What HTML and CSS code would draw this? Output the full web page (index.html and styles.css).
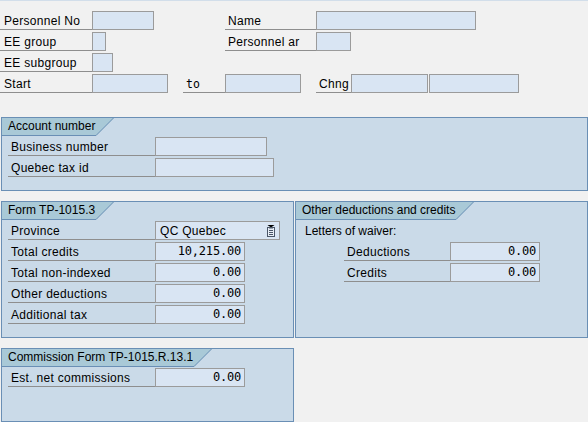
FILE: index.html
```html
<!DOCTYPE html>
<html>
<head>
<meta charset="utf-8">
<link rel="stylesheet" href="styles.css">
</head>
<body>
<div class="page">
  <div class="header">
    <div class="row">
      <div class="left">
        <span class="lbl w92">Personnel No</span>
        <span class="inp" style="width:62px"></span>
      </div>
      <span class="lbl w91">Name</span>
      <span class="inp" style="width:160px"></span>
    </div>
    <div class="row">
      <div class="left">
        <span class="lbl w92">EE group</span>
        <span class="inp" style="width:14px"></span>
      </div>
      <span class="lbl w91">Personnel ar</span>
      <span class="inp" style="width:35px"></span>
    </div>
    <div class="row">
      <div class="left">
        <span class="lbl w92">EE subgroup</span>
        <span class="inp" style="width:21px"></span>
      </div>
    </div>
    <div class="row">
      <span class="lbl w92">Start</span>
      <span class="inp" style="width:76px"></span>
      <span class="lbl lbl-to">to</span>
      <span class="inp" style="width:76px"></span>
      <span class="lbl lbl-chng">Chng</span>
      <span class="inp" style="width:77px"></span>
      <span class="inp inp-next" style="width:90px"></span>
    </div>
  </div>

  <section class="group group-account">
    <div class="tab"><span class="tab-text">Account number</span><svg class="slant" width="18" height="18" viewBox="0 0 18 18"><polygon points="0,0 18,0 0,18" fill="#a9c9d7"/><line x1="0" y1="17.5" x2="18" y2="-0.5" stroke="#6a8fb5" stroke-width="1"/></svg></div>
    <div class="rows">
      <div class="frow"><span class="flbl">Business number</span><span class="inp" style="width:112px"></span></div>
      <div class="frow"><span class="flbl">Quebec tax id</span><span class="inp" style="width:119px"></span></div>
    </div>
  </section>

  <div class="pair">
    <section class="group group-half">
      <div class="tab"><span class="tab-text">Form TP-1015.3</span><svg class="slant" width="18" height="18" viewBox="0 0 18 18"><polygon points="0,0 18,0 0,18" fill="#a9c9d7"/><line x1="0" y1="17.5" x2="18" y2="-0.5" stroke="#6a8fb5" stroke-width="1"/></svg></div>
      <div class="rows">
        <div class="frow"><span class="flbl">Province</span><span class="inp inp-drop" style="width:125px"><span>QC Quebec</span><svg class="dd" width="8" height="12" viewBox="0 0 8 12"><polygon points="0.5,0 7.5,0 4,2.5" fill="#000"/><rect x="0.5" y="2.5" width="7" height="9" fill="#e8eef6" stroke="#4a5668"/><rect x="2" y="2" width="4" height="1.5" fill="#4a5668"/><line x1="2" y1="5.5" x2="6" y2="5.5" stroke="#4a5668"/><line x1="2" y1="7.5" x2="6" y2="7.5" stroke="#4a5668"/><line x1="2" y1="9.5" x2="6" y2="9.5" stroke="#4a5668"/></svg></span></div>
        <div class="frow"><span class="flbl">Total credits</span><span class="inp num" style="width:90px">10,215.00</span></div>
        <div class="frow"><span class="flbl">Total non-indexed</span><span class="inp num" style="width:90px">0.00</span></div>
        <div class="frow"><span class="flbl">Other deductions</span><span class="inp num" style="width:90px">0.00</span></div>
        <div class="frow"><span class="flbl">Additional tax</span><span class="inp num" style="width:90px">0.00</span></div>
      </div>
    </section>
    <section class="group group-half">
      <div class="tab"><span class="tab-text">Other deductions and credits</span><svg class="slant" width="18" height="18" viewBox="0 0 18 18"><polygon points="0,0 18,0 0,18" fill="#a9c9d7"/><line x1="0" y1="17.5" x2="18" y2="-0.5" stroke="#6a8fb5" stroke-width="1"/></svg></div>
      <div class="rows rows-other">
        <div class="frow"><span class="plain">Letters of waiver:</span></div>
        <div class="frow indent"><span class="flbl flbl-short">Deductions</span><span class="inp num" style="width:90px">0.00</span></div>
        <div class="frow indent"><span class="flbl flbl-short">Credits</span><span class="inp num" style="width:90px">0.00</span></div>
      </div>
    </section>
  </div>

  <section class="group group-comm">
    <div class="tab"><span class="tab-text">Commission Form TP-1015.R.13.1</span><svg class="slant" width="18" height="18" viewBox="0 0 18 18"><polygon points="0,0 18,0 0,18" fill="#a9c9d7"/><line x1="0" y1="17.5" x2="18" y2="-0.5" stroke="#6a8fb5" stroke-width="1"/></svg></div>
    <div class="rows">
      <div class="frow"><span class="flbl">Est. net commissions</span><span class="inp num" style="width:90px">0.00</span></div>
    </div>
  </section>
</div>
</body>
</html>
```

FILE: styles.css
```css
* { box-sizing: border-box; }
html, body { margin: 0; padding: 0; }
body {
  background: #f1f1f1;
  font-family: "Liberation Sans", Arial, sans-serif;
  font-size: 12px;
  color: #000;
  width: 588px;
  height: 422px;
  overflow: hidden;
}
.page {
  border-top: 1px solid #d2deea;
}
.header {
  padding-top: 10px;
  display: flex;
  flex-direction: column;
  gap: 2px;
}
.row {
  display: flex;
  height: 19px;
}
.left {
  display: flex;
  width: 225px;
}
.lbl {
  height: 19px;
  line-height: 20px;
  border-bottom: 1px solid #8e8e8e;
  padding-left: 4px;
  letter-spacing: 0.3px;
  white-space: nowrap;
  overflow: hidden;
}
.w92 { width: 92px; }
.w91 { width: 91px; padding-left: 3px; }
.lbl-to { width: 42px; margin-left: 15px; padding-left: 3px; font-family: "DejaVu Sans Mono", monospace; font-size: 11.5px; letter-spacing: 0; }
.lbl-chng { width: 35px; margin-left: 15px; padding-left: 3px; }
.inp {
  height: 19px;
  border: 1px solid #9b9b9b;
  background: #d9e5f3;
  flex: none;
}
.inp-next { margin-left: 1px; }

.group {
  margin-left: 1px;
  border: 1px solid #6a8fb5;
  background: #cadae8;
}
.group-account {
  width: 587px;
  height: 74px;
  margin-top: 24px;
}
.pair {
  display: flex;
  gap: 1px;
  margin-top: 10px;
  margin-left: 1px;
}
.pair .group { margin-left: 0; }
.group-half {
  width: 293px;
  height: 137px;
}
.group-comm {
  width: 293px;
  height: 74px;
  margin-top: 10px;
}
.tab {
  display: flex;
  height: 18px;
}
.tab-text {
  background: #a9c9d7;
  border-bottom: 1px solid #6a8fb5;
  height: 18px;
  line-height: 17px;
  padding-left: 6px;
  padding-right: 1px;
  white-space: nowrap;
}
.slant { display: block; flex: none; }
.rows {
  display: flex;
  flex-direction: column;
  gap: 2px;
  margin-top: 1px;
  padding-left: 6px;
}
.frow {
  display: flex;
  height: 19px;
}
.flbl {
  width: 147px;
  height: 19px;
  line-height: 20px;
  border-bottom: 1px solid #8e8e8e;
  padding-left: 3px;
  letter-spacing: 0.3px;
  white-space: nowrap;
  overflow: hidden;
}
.rows-other { padding-left: 9px; }
.plain { line-height: 20px; }
.indent { margin-left: 39px; }
.flbl-short { width: 106px; }
.num {
  font-family: "DejaVu Sans Mono", monospace;
  font-size: 12px;
  text-align: right;
  padding-right: 3px;
  line-height: 17px;
  letter-spacing: -0.2px;
}
.inp-drop {
  display: flex;
  align-items: center;
  justify-content: space-between;
  padding: 1px 4px 0 4px;
  letter-spacing: 0.3px;
}
.dd { display: block; margin-top: -1px; }
```
